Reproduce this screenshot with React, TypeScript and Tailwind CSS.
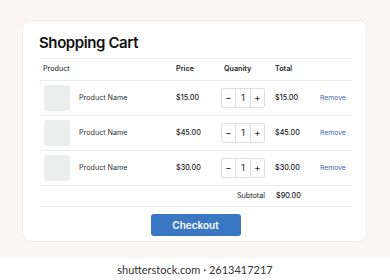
const items = [
  { name: 'Product Name', price: '$15.00', qty: 1, total: '$15.00' },
  { name: 'Product Name', price: '$45.00', qty: 1, total: '$45.00' },
  { name: 'Product Name', price: '$30.00', qty: 1, total: '$30.00' },
]

function QtyControl({ qty }: { qty: number }) {
  return (
    <div className="flex h-[20px] w-[44px] items-stretch rounded-[2px] border border-[#dedede] text-[9.5px] text-[#222]">
      <span className="flex w-[14px] items-center justify-center border-r border-[#dedede]">−</span>
      <span className="flex flex-1 items-center justify-center">{qty}</span>
      <span className="flex w-[14px] items-center justify-center border-l border-[#dedede]">+</span>
    </div>
  )
}

export default function App() {
  return (
    <div className="flex h-[280px] w-[390px] flex-col bg-white font-['Inter',sans-serif]">
      <div className="h-[258px] bg-[#f9f6f3] px-[22px] pt-[20px]">
        <div className="h-[222px] w-[345px] rounded-[8px] border border-[#efebe8] bg-white pl-[16px] pr-[14px]">
          {/* Title */}
          <h1 className="h-[37px] pt-[13px] text-[15px] font-semibold leading-[18px] tracking-[-0.4px] text-[#111]">
            Shopping Cart
          </h1>

          {/* Table */}
          <div className="border-t border-[#ececec] text-[7.2px] text-[#222]">
            <div className="grid h-[22px] grid-cols-[133px_45px_54px_45px_1fr] items-center border-b border-[#ececec] pl-[4px]">
              <span>Product</span>
              <span className="font-semibold">Price</span>
              <span className="pl-[3px] font-semibold">Quanity</span>
              <span className="font-semibold">Total</span>
              <span />
            </div>

            {items.map((item, i) => (
              <div
                key={i}
                className="grid h-[35px] grid-cols-[133px_45px_54px_45px_1fr] items-center border-b border-[#ececec] pl-[4px]"
              >
                <div className="flex items-center gap-[9px] pl-[1px]">
                  <div className="h-[26px] w-[26px] rounded-[3px] bg-[#eceded]" />
                  <span className="text-[#333]">{item.name}</span>
                </div>
                <span className="font-medium text-[#1a1a1a]">{item.price}</span>
                <div>
                  <QtyControl qty={item.qty} />
                </div>
                <span className="font-medium text-[#1a1a1a]">{item.total}</span>
                <span className="text-[6.8px] text-[#3b6aad]">Remove</span>
              </div>
            ))}

            {/* Subtotal */}
            <div className="flex h-[21px] items-center border-b border-[#ececec] pl-[198px]">
              <span className="w-[39px]">Subtotal</span>
              <span className="font-medium text-[#1a1a1a]">$90.00</span>
            </div>
          </div>

          {/* Checkout */}
          <div className="flex justify-center pt-[7px]">
            <button className="h-[22px] w-[90px] rounded-[3px] bg-[#3a77c2] text-[10px] font-semibold text-white">
              Checkout
            </button>
          </div>
        </div>
      </div>
      <div className="flex flex-1 items-center justify-center pt-[2px] font-['Lato',sans-serif] text-[11px] text-[#333]">
        shutterstock.com · 2613417217
      </div>
    </div>
  )
}
